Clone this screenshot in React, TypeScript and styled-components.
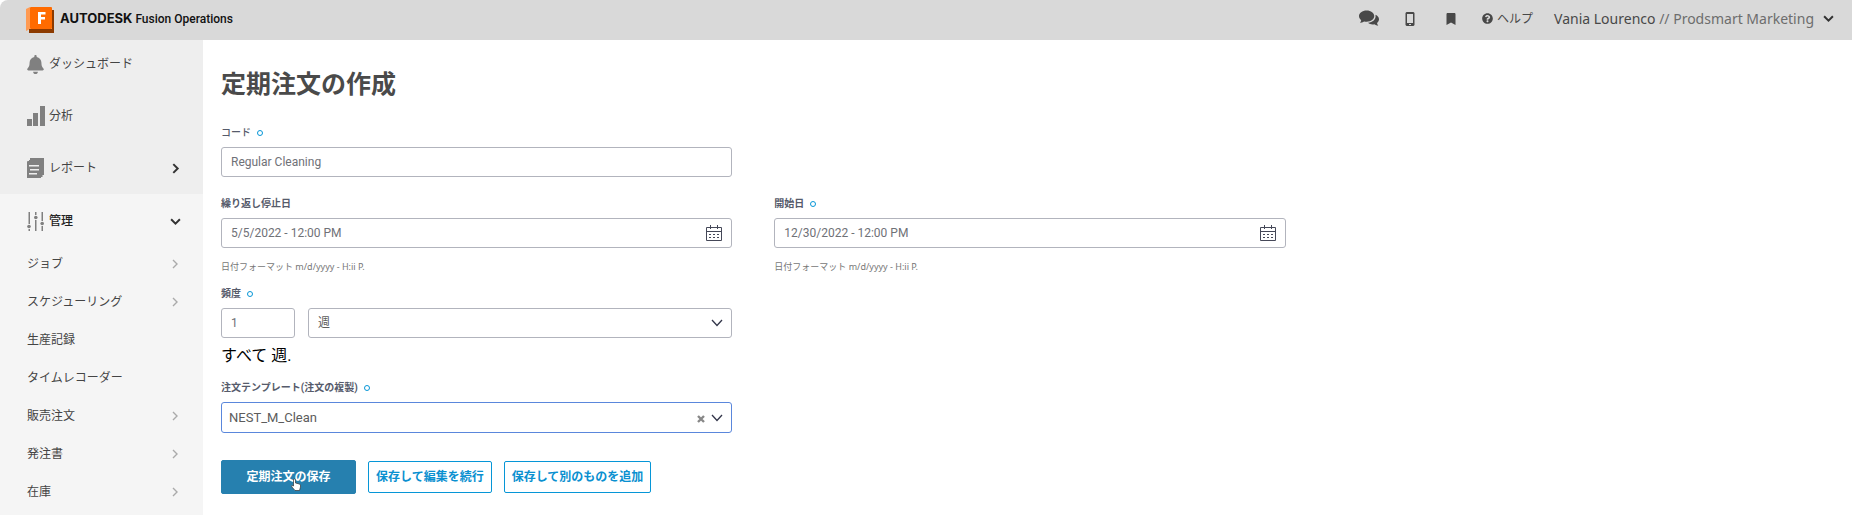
import React from "react";
import styled, { createGlobalStyle } from "styled-components";
import { FaBell, FaBookmark, FaQuestionCircle } from "react-icons/fa";

const latin = `Roboto, "Noto Sans CJK JP", sans-serif`;

const GlobalStyle = createGlobalStyle`
  *, *::before, *::after { box-sizing: border-box; }
  body { margin: 0; background: #fff; color: #4a4a4a; font: 12px/16px ${latin}; }
  a { color: inherit; text-decoration: none; }
  button, input, select { font: inherit; color: inherit; margin: 0; }
  button { cursor: pointer; }
`;

const Shell = styled.div`
  display: flex;
  flex-direction: column;
  min-height: 100vh;
`;

const TopBar = styled.header`
  display: flex;
  align-items: center;
  justify-content: space-between;
  height: 40px;
  padding: 0 18px 0 26px;
  background: #d9d9d9;
  border-top-left-radius: 8px;
`;

const Brand = styled.a`
  display: flex;
  align-items: center;
  gap: 5px;
  color: #111;
  svg { display: block; }
`;

const BrandName = styled.span`
  padding-bottom: 4px;
  font: 500 12px/16px Roboto, sans-serif;
  b { font: 700 13px/16px Inter, sans-serif; }
`;

const Tools = styled.nav`
  display: flex;
  align-items: center;
  gap: 21px;
  padding-bottom: 3px;
  color: #484848;
`;

const Tool = styled.a`
  display: flex;
  align-items: center;
  gap: 4px;
  svg { display: block; }
`;

const IconTool = styled(Tool)`
  justify-content: center;
  width: 20px;
`;

const Account = styled.button`
  display: flex;
  align-items: center;
  gap: 9px;
  padding: 0;
  border: 0;
  background: none;
  font: 400 14px/16px "Noto Sans", sans-serif;
  span span { color: #6d6d6d; }
`;

const Body = styled.div`
  display: flex;
  flex: 1;
`;

const Sidebar = styled.nav`
  flex: 0 0 203px;
  background: #f5f5f5;
`;

const MainLinks = styled.div`
  display: grid;
  gap: 6px;
  padding: 1px 0 3px;
  background: #eee;
`;

const NavLink = styled.a`
  display: flex;
  align-items: center;
  gap: 4px;
  height: 46px;
  padding: 0 22px 0 26px;
  color: #444;
  > svg:first-child { flex: none; }
`;

const NavText = styled.span<{ $strong?: boolean }>`
  flex: 1;
  font-weight: ${(p) => (p.$strong ? 500 : 400)};
  color: ${(p) => (p.$strong ? "#222" : "inherit")};
`;

const Section = styled.div`
  padding-top: 4px;
`;

const SubLinks = styled.div`
  padding-top: 1px;
`;

const SubLink = styled.a`
  display: flex;
  align-items: center;
  justify-content: space-between;
  height: 38px;
  padding: 0 23px 0 27px;
  color: #444;
`;

const Main = styled.main`
  flex: 1;
  min-width: 0;
  padding: 25px 13px 20px 18px;
`;

const Title = styled.h1`
  margin: 0 0 20px;
  font-size: 25px;
  line-height: 40px;
  font-weight: 700;
  color: #4a4a4a;
`;

const Form = styled.form`
  display: grid;
  grid-template-columns: repeat(3, minmax(0, 1fr));
  column-gap: 42px;
`;

const Field = styled.div<{ $first?: boolean; $gap?: number }>`
  grid-column-start: ${(p) => (p.$first ? 1 : "auto")};
  margin-bottom: ${(p) => p.$gap || 0}px;
`;

const Label = styled.label<{ $light?: boolean }>`
  display: flex;
  align-items: center;
  gap: 6px;
  height: 16px;
  margin-bottom: 6px;
  font-size: 10px;
  font-weight: ${(p) => (p.$light ? 500 : 700)};
  color: #565b6b;
`;

const Required = styled.span`
  width: 6px;
  height: 6px;
  border: 1px solid #0696d7;
  border-radius: 50%;
`;

const Control = styled.div<{ $active?: boolean }>`
  display: flex;
  align-items: center;
  gap: 6px;
  height: ${(p) => (p.$active ? 31 : 30)}px;
  padding-right: 8px;
  border: 1px solid ${(p) => (p.$active ? "#5a87dc" : "#b2b4bd")};
  border-radius: 3px;
  background: #fff;
  svg { display: block; flex: none; }
`;

const TextInput = styled.input`
  flex: 1;
  min-width: 0;
  height: 100%;
  padding: 0 9px;
  border: 0;
  outline: 0;
  background: none;
  font-size: 12px;
  color: #6f7177;
`;

const Picker = styled.select<{ $large?: boolean }>`
  flex: 1;
  min-width: 0;
  height: 100%;
  padding: 0 ${(p) => (p.$large ? 7 : 9)}px;
  border: 0;
  outline: 0;
  appearance: none;
  background: none;
  font-size: ${(p) => (p.$large ? 13 : 12)}px;
  color: #5c5c5c;
`;

const IconButton = styled.button`
  display: block;
  padding: 2px 0 0;
  border: 0;
  background: none;
`;

const Hint = styled.p`
  margin: 11px 0;
  font-family: "Noto Sans", "Noto Sans CJK JP", sans-serif;
  font-size: 9px;
  line-height: 16px;
  color: #777;
`;

const Frequency = styled.div`
  display: grid;
  grid-template-columns: 74px 1fr;
  gap: 13px;
`;

const Summary = styled.p`
  margin: 6px 0 12px;
  font-size: 16px;
  line-height: 24px;
  color: #000;
`;

const Actions = styled.div`
  display: flex;
  align-items: center;
  gap: 12px;
  grid-column: 1 / -1;
`;

const Action = styled.button<{ $primary?: boolean }>`
  position: relative;
  height: ${(p) => (p.$primary ? 34 : 32)}px;
  min-width: ${(p) => (p.$primary ? 135 : 0)}px;
  padding: 0 7px;
  border: 1px solid ${(p) => (p.$primary ? "#2680af" : "#0696d7")};
  border-radius: 2px;
  background: ${(p) => (p.$primary ? "#2680af" : "#fff")};
  color: ${(p) => (p.$primary ? "#fff" : "#0a90d0")};
  font-weight: 700;
  white-space: nowrap;
`;

const Pointer = styled.svg`
  position: absolute;
  left: 68px;
  top: 17px;
`;

const Chevron = ({ d, color = "#333", w = 1.8, size = 11 }: { d: "right" | "down"; color?: string; w?: number; size?: number }) => (
  <svg width={size} height={size} viewBox="0 0 10 10" fill="none" stroke={color} strokeWidth={w} aria-hidden="true">
    <path d={d === "right" ? "M3 1l4 4-4 4" : "M1 3l4 4 4-4"} />
  </svg>
);

const Arrow = () => (
  <svg width="12" height="8" viewBox="0 0 12 8" fill="none" stroke="#33364a" strokeWidth="1.3" aria-hidden="true">
    <path d="M1 1l5 5.500 5-5.500" />
  </svg>
);

const Calendar = () => (
  <svg width="18" height="17" viewBox="0 0 18 17" fill="none" stroke="#454858" aria-hidden="true">
    <path d="M1.500 2.500h15v13h-15zM1.500 6.500h15M5.500 0v4M12.500 0v4" />
    <path d="M4 9.500h10M4 12.500h10" strokeDasharray="2 2" />
  </svg>
);

const Chat = () => (
  <svg width="21" height="17" viewBox="0 0 21 17" fill="currentColor" aria-hidden="true">
    <path d="M8 0c4.600 0 8 2.600 8 6s-3.400 6-8 6c-1 0-1.800-.1-2.600-.3C4 12.600 2.500 13 1 13c.8-.8 1.200-1.700 1.300-2.600C.9 9.300 0 7.700 0 6c0-3.400 3.400-6 8-6z" />
    <path d="M17.300 4.500C19.600 5.500 21 7.200 21 9.200c0 1.500-.8 2.900-2.100 3.900.1.900.6 1.900 1.300 2.900-1.500-.1-2.900-.6-4.100-1.500-2.300.5-5 .1-6.600-1.500 4.600-.4 8.800-3.500 7.800-8.500z" />
  </svg>
);

const Logo = () => (
  <svg width="29" height="26" viewBox="0 0 29 26" aria-hidden="true">
    <path d="M0 2l4-2v22l-4 2z" fill="#ff9a52" />
    <path d="M3 22h23V3h2v23H3z" fill="#8c3a00" />
    <rect x="4" width="22" height="22" rx="1" fill="#ff6b00" />
    <path d="M12 5h7.500v2.500H15v2.500h4v2.500h-4V17h-3z" fill="#fff" />
  </svg>
);

const subLinks: [string, boolean][] = [
  ["ジョブ", true],
  ["スケジューリング", true],
  ["生産記録", false],
  ["タイムレコーダー", false],
  ["販売注文", true],
  ["発注書", true],
  ["在庫", true],
];

export default function App() {
  return (
    <Shell>
      <GlobalStyle />
      <TopBar>
        <Brand href="#">
          <Logo />
          <BrandName><b>AUTODESK</b> Fusion Operations</BrandName>
        </Brand>
        <Tools>
          <IconTool href="#" aria-label="チャット"><Chat /></IconTool>
          <IconTool href="#" aria-label="モバイル">
            <svg width="10" height="14" viewBox="0 0 10 14"><path fillRule="evenodd" fill="currentColor" d="M1.500 0h7l1 1v12l-1 1h-7l-1-1V1zM2 2v9h6V2zM4 12v1h2v-1z" /></svg>
          </IconTool>
          <IconTool href="#" aria-label="ブックマーク"><FaBookmark size={12} /></IconTool>
          <Tool href="#"><FaQuestionCircle size={11} />ヘルプ</Tool>
          <Account type="button">
            <span>Vania Lourenco <span>// Prodsmart Marketing</span></span>
            <Chevron d="down" />
          </Account>
        </Tools>
      </TopBar>
      <Body>
        <Sidebar>
          <MainLinks>
            <NavLink href="#">
              <FaBell size={19} color="#808080" />
              <NavText>ダッシュボード</NavText>
            </NavLink>
            <NavLink href="#">
              <svg width="19" height="20" viewBox="0 0 19 20" fill="#808080"><path d="M1 13h5v7H1zM7 7h5v13H7zM14 0h5v20h-5z" /></svg>
              <NavText>分析</NavText>
            </NavLink>
            <NavLink href="#">
              <svg width="19" height="20" viewBox="0 0 19 20" fill="#808080">
                <path d="M4 0h14v17h-2V2H4z" />
                <path fillRule="evenodd" d="M3 2h13.500v17H3zM1 4l1-1h13v17H1zM3 7v1.500h9V7zM4 11v1.500h9V11zM3 15v1.500h8V15z" fill="#808080" />
                <path d="M1 4l1-1h13v17H1z" />
                <path d="M3 7h10v1.500H3zM4 11h9v1.500H4zM3 15h8v1.500H3z" fill="#eee" />
              </svg>
              <NavText>レポート</NavText>
              <Chevron d="right" />
            </NavLink>
          </MainLinks>
          <Section>
            <NavLink href="#">
              <svg width="19" height="20" viewBox="0 0 19 20" fill="#808080">
                <path d="M2.500 1h1.500v12H2.500zM2.500 18H4v2H2.500zM9 1h1.500v3H9zM9 9h1.500v11H9zM15.500 1H17v9h-1.500zM15.500 15H17v5h-1.500z" />
                <circle cx="3" cy="15.500" r="1.800" /><circle cx="9.800" cy="6.500" r="1.800" /><circle cx="16.200" cy="12.500" r="1.800" />
              </svg>
              <NavText $strong>管理</NavText>
              <Chevron d="down" />
            </NavLink>
            <SubLinks>
              {subLinks.map(([name, more]) => (
                <SubLink href="#" key={name}>{name}{more && <Chevron d="right" color="#aaa" w={1.4} size={10} />}</SubLink>
              ))}
            </SubLinks>
          </Section>
        </Sidebar>
        <Main>
          <Title>定期注文の作成</Title>
          <Form onSubmit={(e) => e.preventDefault()}>
            <Field $first $gap={19}>
              <Label htmlFor="code" $light>コード<Required /></Label>
              <Control><TextInput id="code" defaultValue="Regular Cleaning" /></Control>
            </Field>
            <Field $first>
              <Label htmlFor="stop">繰り返し停止日</Label>
              <Control><TextInput id="stop" defaultValue="5/5/2022 - 12:00 PM" /><Calendar /></Control>
              <Hint>日付フォーマット m/d/yyyy - H:ii P.</Hint>
            </Field>
            <Field>
              <Label htmlFor="start">開始日<Required /></Label>
              <Control><TextInput id="start" defaultValue="12/30/2022 - 12:00 PM" /><Calendar /></Control>
              <Hint>日付フォーマット m/d/yyyy - H:ii P.</Hint>
            </Field>
            <Field $first>
              <Label htmlFor="count">頻度<Required /></Label>
              <Frequency>
                <Control><TextInput id="count" defaultValue="1" /></Control>
                <Control><Picker aria-label="単位"><option>週</option></Picker><Arrow /></Control>
              </Frequency>
              <Summary>すべて 週.</Summary>
            </Field>
            <Field $first $gap={27}>
              <Label htmlFor="template">注文テンプレート(注文の複製)<Required /></Label>
              <Control $active>
                <Picker id="template" $large><option>NEST_M_Clean</option></Picker>
                <IconButton type="button" aria-label="クリア">
                  <svg width="8" height="8" viewBox="0 0 8 8" stroke="#888" strokeWidth="2.400"><path d="M1 1l6 6M7 1l-6 6" /></svg>
                </IconButton>
                <Arrow />
              </Control>
            </Field>
            <Actions>
              <Action $primary type="submit">
                定期注文の保存
                <Pointer width="12" height="14" viewBox="0 0 12 14" aria-hidden="true">
                  <path d="M3.500 1.500q1-1 2 0V5l4 1q1.500.5 1 3l-1 3.500H5L1.500 8.500Q1 7 3.500 8z" fill="#fff" stroke="#333" strokeWidth=".7" />
                </Pointer>
              </Action>
              <Action type="button">保存して編集を続行</Action>
              <Action type="button">保存して別のものを追加</Action>
            </Actions>
          </Form>
        </Main>
      </Body>
    </Shell>
  );
}
